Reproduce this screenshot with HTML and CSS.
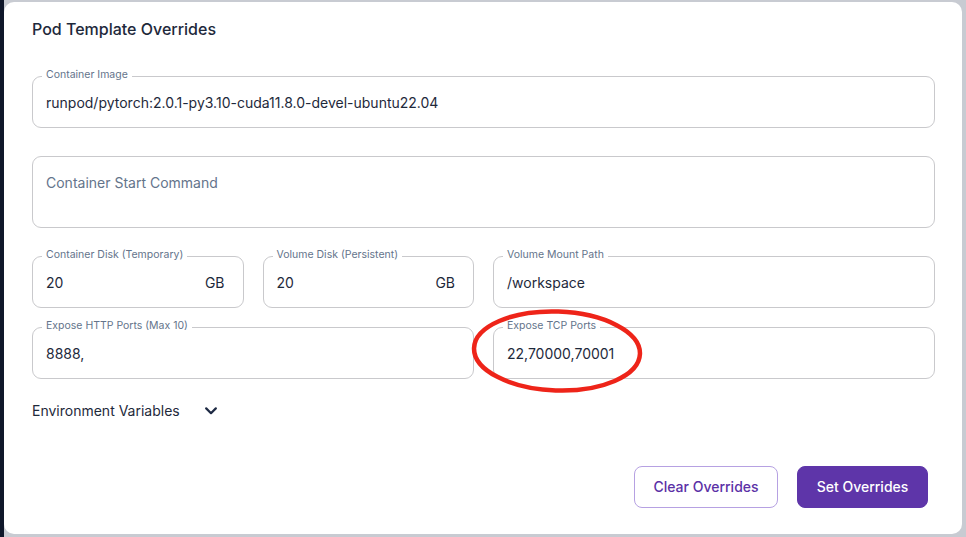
FILE: index.html
```html
<!DOCTYPE html>
<html lang="en">
<head>
<meta charset="utf-8">
<title>Pod Template Overrides</title>
<link rel="stylesheet" href="styles.css">
</head>
<body>
<div class="screen">
  <div class="backdrop-left"></div>
  <main class="card">
    <h2 class="title">Pod Template Overrides</h2>
    <div class="form">
      <div class="field">
        <span class="label">Container Image</span>
        <div class="value">runpod/pytorch:2.0.1-py3.10-cuda11.8.0-devel-ubuntu22.04</div>
      </div>
      <div class="field tall">
        <div class="placeholder">Container Start Command</div>
      </div>
      <div class="grid">
        <div class="field">
          <span class="label">Container Disk (Temporary)</span>
          <div class="value split"><span>20</span><span>GB</span></div>
        </div>
        <div class="field">
          <span class="label">Volume Disk (Persistent)</span>
          <div class="value split"><span>20</span><span>GB</span></div>
        </div>
        <div class="field span2">
          <span class="label">Volume Mount Path</span>
          <div class="value">/workspace</div>
        </div>
        <div class="field span2">
          <span class="label">Expose HTTP Ports (Max 10)</span>
          <div class="value">8888,</div>
        </div>
        <div class="field span2">
          <span class="label">Expose TCP Ports</span>
          <div class="value">22,70000,70001</div>
        </div>
      </div>
    </div>
    <div class="env">
      <span>Environment Variables</span>
      <svg class="chevron" width="12" height="8" viewBox="0 0 12 8" aria-hidden="true">
        <polyline points="1.2,1.4 6,6.2 10.8,1.4" fill="none" stroke="#1e2a44" stroke-width="2.2" stroke-linecap="round" stroke-linejoin="round"/>
      </svg>
    </div>
    <div class="actions">
      <button class="btn btn-outline">Clear Overrides</button>
      <button class="btn btn-primary">Set Overrides</button>
    </div>
    <svg class="annotation" width="176" height="88" viewBox="0 0 176 88" aria-hidden="true">
      <ellipse cx="87" cy="43" rx="83" ry="39.5" fill="none" stroke="#ee2419" stroke-width="4.5" transform="rotate(2 87 43)"/>
    </svg>
  </main>
</div>
</body>
</html>
```

FILE: styles.css
```css
* { box-sizing: border-box; }

html, body {
  margin: 0;
  width: 966px;
  height: 537px;
  overflow: hidden;
}

body {
  font-family: Inter, "Noto Sans", "Liberation Sans", sans-serif;
  color: #1e293b;
  background: #c8cbd2;
}

.screen {
  display: flex;
  align-items: flex-start;
  padding-top: 2px;
  height: 537px;
}

.backdrop-left {
  width: 4px;
  height: 537px;
  margin-top: -2px;
  background: #0f172a;
  flex: none;
}

.card {
  position: relative;
  width: 958px;
  height: 532px;
  background: #ffffff;
  border-radius: 10px;
  padding: 15px 27px 0 28px;
  flex: none;
}

.title {
  margin: 0;
  font-size: 16px;
  line-height: 24px;
  font-weight: 550;
  color: #1e293b;
}

.form {
  margin-top: 35px;
  display: flex;
  flex-direction: column;
  gap: 28px;
}

.grid {
  display: grid;
  grid-template-columns: repeat(4, 1fr);
  column-gap: 19px;
  row-gap: 19px;
}

.span2 { grid-column: span 2; }

.field {
  position: relative;
  height: 52px;
  border: 1px solid #c9c9cc;
  border-radius: 9px;
}

.field.tall { height: 72px; }

.label {
  position: absolute;
  top: -9px;
  left: 9px;
  padding: 0 4px;
  background: #ffffff;
  font-size: 10.5px;
  line-height: 14px;
  color: #64748b;
  white-space: nowrap;
}

.value,
.placeholder {
  padding: 16px 18px 14px 13px;
  font-size: 14px;
  line-height: 20px;
  color: #1e293b;
  white-space: nowrap;
}

.placeholder { color: #64748b; }

.split {
  display: flex;
  justify-content: space-between;
}

.env {
  margin-top: 22px;
  display: flex;
  align-items: center;
  font-size: 14px;
  line-height: 20px;
  color: #1e293b;
}

.chevron {
  margin-left: 25px;
  margin-top: -1px;
}

.actions {
  margin-top: 45px;
  padding-right: 7px;
  display: flex;
  justify-content: flex-end;
  gap: 19px;
}

.btn {
  height: 42px;
  padding: 0 10px;
  border-radius: 8px;
  font-family: Inter, "Noto Sans", "Liberation Sans", sans-serif;
  font-size: 14px;
  font-weight: 500;
  line-height: 20px;
  white-space: nowrap;
  cursor: pointer;
}

.btn-outline {
  width: 144px;
  background: #ffffff;
  color: #5b31a6;
  border: 1px solid #b6a1e2;
}

.btn-primary {
  width: 131px;
  background: #5e35a9;
  color: #ffffff;
  border: 1px solid #5e35a9;
}

.annotation {
  position: absolute;
  left: 466px;
  top: 306px;
}
```
